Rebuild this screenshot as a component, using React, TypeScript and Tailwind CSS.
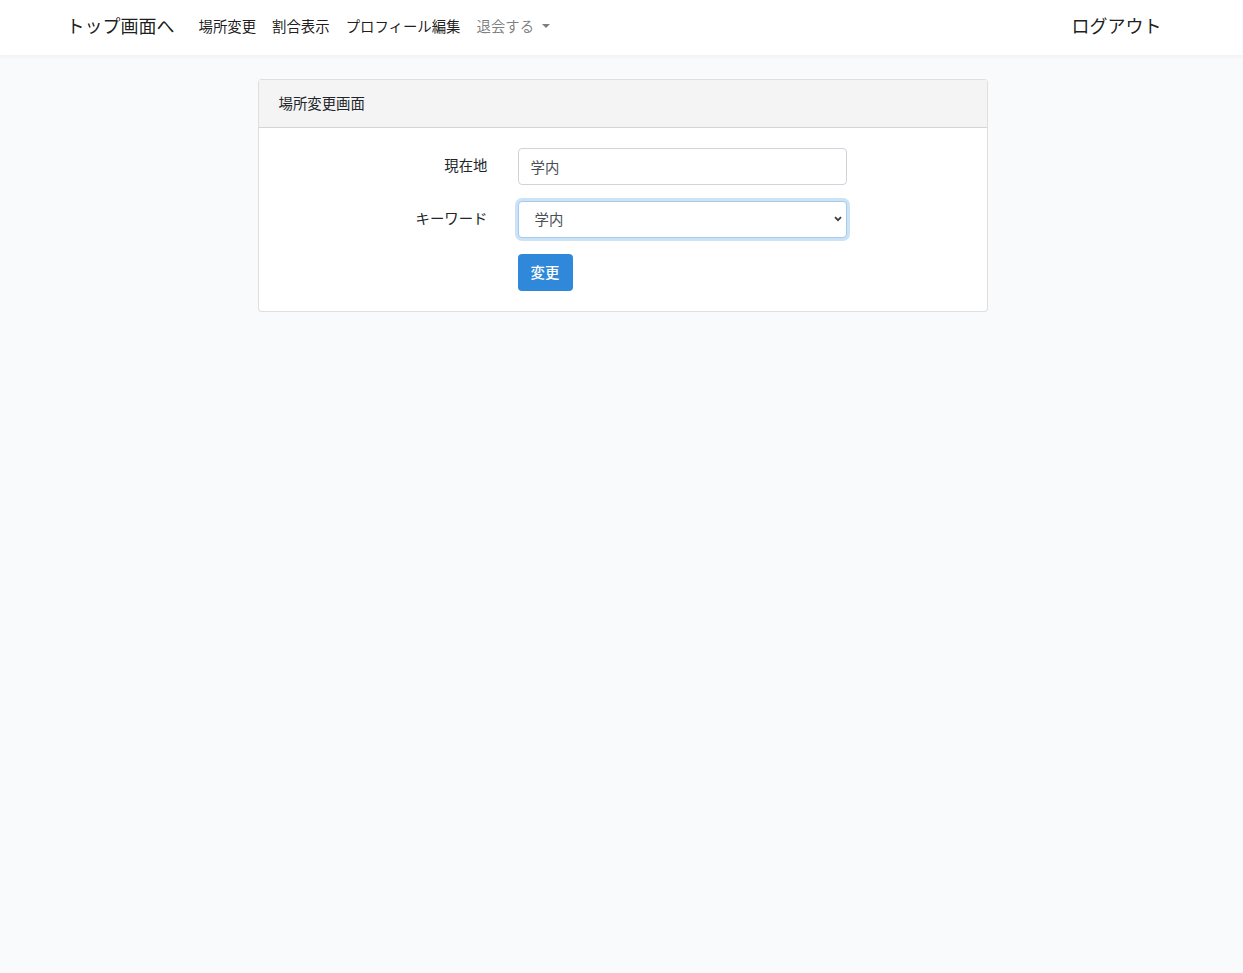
import React from "react";

const NAV_LINKS = ["場所変更", "割合表示", "プロフィール編集"];

const FONT = {
  fontFamily:
    '"Noto Sans", "Noto Sans CJK JP", "Liberation Sans", sans-serif',
};

export default function App() {
  return (
    <div
      className="min-h-[973px] bg-[#f8fafc] text-[#212529]"
      style={FONT}
    >
      {/* Navbar */}
      <nav className="h-[55px] bg-white shadow-[0_2px_4px_rgba(0,0,0,0.04)]">
        <div className="mx-auto flex h-full w-[1110px] items-center justify-between pb-[2px]">
          <div className="flex items-center">
            <a href="#" className="mr-4 text-[18px] text-black/90">
              トップ画面へ
            </a>
            {NAV_LINKS.map((l) => (
              <a key={l} href="#" className="px-2 text-[14.4px] text-black/90">
                {l}
              </a>
            ))}
            <a
              href="#"
              className="flex items-center px-2 text-[14.4px] text-black/50"
            >
              退会する
              <span className="ml-[8px] inline-block h-0 w-0 border-x-[4px] border-t-[4px] border-x-transparent border-t-black/50" />
            </a>
          </div>
          <a href="#" className="pr-[15px] text-[18px] text-black/90">
            ログアウト
          </a>
        </div>
      </nav>

      {/* Card */}
      <div className="flex justify-center py-6 pl-[2px]">
        <div className="w-[730px] rounded border border-black/[0.125] bg-white">
          <div className="border-b border-black/[0.125] bg-[#f4f4f4] px-5 py-3 text-[14.4px] leading-[23px]">
            場所変更画面
          </div>
          <div className="p-5">
            <div className="mb-4 flex gap-[30px]">
              <label className="w-[209px] pt-[7px] text-right text-[14.4px] leading-[22px]">
                現在地
              </label>
              <input
                readOnly
                value="学内"
                className="h-[37px] w-[329px] rounded border border-[#ced4da] bg-white px-3 text-[14.4px] text-[#495057] outline-none"
              />
            </div>
            <div className="mb-4 flex gap-[30px]">
              <label className="w-[209px] pt-[7px] text-right text-[14.4px] leading-[22px]">
                キーワード
              </label>
              <div className="relative w-[329px]">
                <select
                  defaultValue="学内"
                  className="h-[37px] w-full appearance-none rounded border border-[#a1cbef] bg-white pl-4 text-[14.4px] text-[#495057] shadow-[0_0_0_3px_rgba(52,144,220,0.25)] outline-none"
                >
                  <option>学内</option>
                  <option>学外</option>
                </select>
                <svg
                  className="pointer-events-none absolute right-[5px] top-[15px]"
                  width="8"
                  height="6"
                  viewBox="0 0 8 6"
                  fill="none"
                >
                  <path
                    d="M1 1.2 L4 4.2 L7 1.2"
                    stroke="#3a3a3a"
                    strokeWidth="1.7"
                  />
                </svg>
              </div>
            </div>
            <div className="flex gap-[30px]">
              <div className="w-[209px]" />
              <button className="h-[37px] w-[55px] rounded bg-[#2f88d9] text-[14.4px] font-medium text-white">
                変更
              </button>
            </div>
          </div>
        </div>
      </div>
    </div>
  );
}
